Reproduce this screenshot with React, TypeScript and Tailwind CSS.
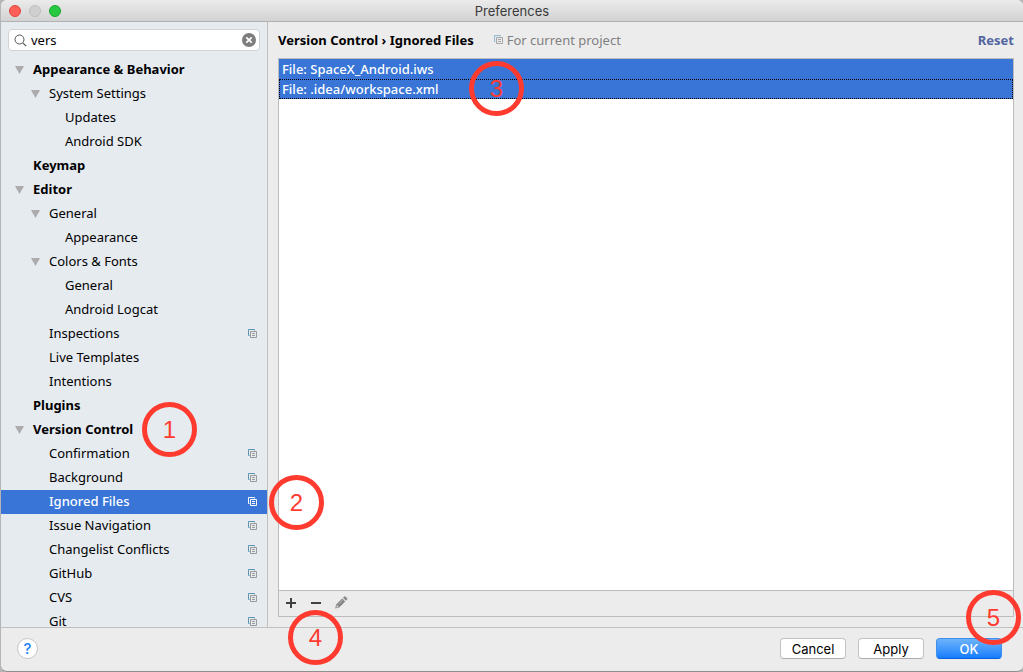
import { useState } from 'react';

type Item = {
  label: string;
  level: number;
  open?: boolean;
  project?: boolean;
  mark?: string;
};

const items: Item[] = [
  { label: 'Appearance & Behavior', level: 0, open: true },
  { label: 'System Settings', level: 1, open: true },
  { label: 'Updates', level: 2 },
  { label: 'Android SDK', level: 2 },
  { label: 'Keymap', level: 0 },
  { label: 'Editor', level: 0, open: true },
  { label: 'General', level: 1, open: true },
  { label: 'Appearance', level: 2 },
  { label: 'Colors & Fonts', level: 1, open: true },
  { label: 'General', level: 2 },
  { label: 'Android Logcat', level: 2 },
  { label: 'Inspections', level: 1, project: true },
  { label: 'Live Templates', level: 1 },
  { label: 'Intentions', level: 1 },
  { label: 'Plugins', level: 0 },
  { label: 'Version Control', level: 0, open: true, mark: '1' },
  { label: 'Confirmation', level: 1, project: true },
  { label: 'Background', level: 1, project: true },
  { label: 'Ignored Files', level: 1, project: true },
  { label: 'Issue Navigation', level: 1, project: true },
  { label: 'Changelist Conflicts', level: 1, project: true },
  { label: 'GitHub', level: 1, project: true },
  { label: 'CVS', level: 1, project: true },
  { label: 'Git', level: 1, project: true },
];

const indent = ['pl-3.5', 'pl-[30px]', 'pl-[46px]'];

function ProjectIcon({ back, front }: { back: string; front: string }) {
  return (
    <svg width="9" height="9" viewBox="0 0 9 9" fill="none" className="mb-px shrink-0" aria-hidden="true">
      <path d="M1.5 6.5h-1v-6h6v1" stroke={back} />
      <path d="M2.5 2.5h6v6h-6zM4 4.5h3M4 6.5h3" stroke={front} />
    </svg>
  );
}

// Numbered ring that points at a step of the walkthrough
function Mark({ n, className }: { n: string; className: string }) {
  return (
    <span
      className={`pointer-events-none absolute z-10 flex size-[55px] items-center justify-center rounded-full border-5 border-[#ff3b30] font-['Liberation_Sans',sans-serif] text-2xl font-normal text-[#ff3b30] ${className}`}
    >
      {n}
    </span>
  );
}

function TreeRow({ item, selected, onSelect }: { item: Item; selected: boolean; onSelect: () => void }) {
  return (
    <li className="relative">
      <button
        type="button"
        onClick={onSelect}
        className={`flex h-6 w-full items-center pr-2.5 text-left ${indent[item.level]} ${item.level === 0 ? 'font-bold' : ''} ${selected ? 'bg-[#3875d7] font-medium text-white' : ''}`}
      >
        <span className="w-[18px] shrink-0">
          {item.open && (
            <svg width="9" height="8" viewBox="0 0 9 8" aria-hidden="true">
              <path d="M0 0h9L4.500 8z" fill="#acacac" />
            </svg>
          )}
        </span>
        <span className="grow pb-0.5">{item.label}</span>
        {item.project && (
          <ProjectIcon back={selected ? '#ffffff' : '#5a93b5'} front={selected ? '#ffffff' : '#9a9a9a'} />
        )}
      </button>
      {item.mark && <Mark n={item.mark} className="-top-4 left-[141px]" />}
    </li>
  );
}

export default function App() {
  const [selected, setSelected] = useState(18);
  const [query, setQuery] = useState('vers');

  return (
    <div className="h-screen bg-[#b5b5b5] pl-px font-['Noto_Sans',sans-serif] text-[13px] leading-5 text-black">
      <div className="flex h-full flex-col overflow-hidden rounded-md border-b border-[#8f8f8f] bg-[#ececec]">
        <header className="relative flex h-[22px] shrink-0 items-center justify-center border-b border-[#b1b1b1] bg-linear-to-b from-[#ebebeb] to-[#d2d2d2]">
          <div className="absolute left-2 flex gap-2">
            <button type="button" aria-label="Close" className="size-3 rounded-full border border-[#e2463f] bg-[#ff5f57]" />
            <button type="button" aria-label="Minimize" className="size-3 rounded-full border border-[#bdbdbd] bg-[#cfcfcf]" />
            <button type="button" aria-label="Zoom" className="size-3 rounded-full border border-[#17a82d] bg-[#28c940]" />
          </div>
          <h1 className="font-[Inter,sans-serif] text-[#3a3a3a]">Preferences</h1>
        </header>

        <div className="flex min-h-0 grow">
          <aside className="w-[267px] shrink-0 overflow-hidden border-r border-[#c0c0c0] bg-[#e6ebf0]">
            <div className="m-[7px] flex h-[22px] items-center rounded border border-[#d0d3d6] bg-white pr-[3px] pl-[5px]">
              <svg width="13" height="13" viewBox="0 0 13 13" fill="none" stroke="#555" aria-hidden="true">
                <circle cx="5.500" cy="5.500" r="4.500" />
                <path d="M8.800 8.800l3.400 3.400" strokeWidth="1.200" />
              </svg>
              <input
                type="text"
                aria-label="Search settings"
                value={query}
                onChange={(e) => setQuery(e.target.value)}
                className="ml-1 min-w-0 grow outline-none"
              />
              <button type="button" aria-label="Clear search" onClick={() => setQuery('')}>
                <svg width="14" height="14" viewBox="0 0 14 14" aria-hidden="true">
                  <circle cx="7" cy="7" r="7" fill="#7d7d7d" />
                  <path d="M4.300 4.300l5.400 5.400M9.700 4.300l-5.400 5.400" stroke="#fff" strokeWidth="1.800" />
                </svg>
              </button>
            </div>
            <ul>
              {items.map((item, i) => (
                <TreeRow key={i} item={item} selected={i === selected} onSelect={() => setSelected(i)} />
              ))}
            </ul>
          </aside>

          <main className="relative flex min-w-0 grow flex-col pr-[9px] pb-2.5 pl-2.5">
            <div className="flex h-9 shrink-0 items-center">
              <h2 className="font-bold">Version Control › Ignored Files</h2>
              <span className="mr-1 ml-5">
                <ProjectIcon back="#8db9d3" front="#a5a5a5" />
              </span>
              <span className="text-[#808080]">For current project</span>
              <a href="#reset" className="ml-auto font-bold text-[#5365a0]">
                Reset
              </a>
            </div>

            <section className="relative flex min-h-0 grow flex-col border border-[#bcbcbc]">
              <ul className="grow bg-white font-medium text-white">
                <li className="h-5 bg-[#3875d7] px-[3px]">File: SpaceX_Android.iws</li>
                <li className="flex h-5 items-center border border-dotted border-black bg-[#3875d7] px-0.5">
                  File: .idea/workspace.xml
                </li>
              </ul>
              <div className="flex h-[26px] shrink-0 items-center gap-3 border-t border-[#bcbcbc] pb-0.5 pl-1.5">
                <button type="button" aria-label="Add">
                  <svg width="13" height="12" viewBox="0 0 13 12" stroke="#404040" strokeWidth="2" aria-hidden="true">
                    <path d="M1 6h10M6 1v10" />
                  </svg>
                </button>
                <button type="button" aria-label="Remove">
                  <svg width="13" height="12" viewBox="0 0 13 12" stroke="#404040" strokeWidth="2" aria-hidden="true">
                    <path d="M1 6h10" />
                  </svg>
                </button>
                <button type="button" aria-label="Edit">
                  <svg width="13" height="13" viewBox="0 0 13 13" aria-hidden="true">
                    <path d="M.2 12.500l1-4L7.200 2.500l3 3-6 6z" fill="#858585" />
                    <path d="M8 1.700l1.200-1.200q.6-.5 1.200 0l1.800 1.800q.5.600 0 1.200l-1.200 1.200z" fill="#8c8c8c" />
                    <path d="M1.700 9l2 2-2.200.500z" fill="#ececec" />
                    <path d="M3.200 8.500l5-5" stroke="#b4b4b4" />
                  </svg>
                </button>
              </div>
              <Mark n="3" className="top-0.5 left-[190px]" />
            </section>
            <Mark n="2" className="top-[453px] left-px" />
            <Mark n="4" className="-bottom-[38px] left-5" />
            <Mark n="5" className="right-0.5 -bottom-[18px]" />
          </main>
        </div>

        <footer className="flex h-11 shrink-0 items-center gap-3 border-t border-[#c0c0c0] pr-[21px] pb-0.5 pl-4 font-[Inter,sans-serif]">
          <button
            type="button"
            aria-label="Help"
            className="mr-auto size-[21px] rounded-full border border-[#c4c4c4] bg-white text-[15px] leading-5 font-medium text-[#1a82fb]"
          >
            ?
          </button>
          <button type="button" className="h-[21px] w-[66px] rounded border border-[#c3c3c3] border-b-[#acacac] bg-white">
            Cancel
          </button>
          <button type="button" className="h-[21px] w-[66px] rounded border border-[#c3c3c3] border-b-[#acacac] bg-white">
            Apply
          </button>
          <button
            type="button"
            className="h-[21px] w-[66px] rounded border border-[#3f8fee] border-b-[#0a60dc] bg-linear-to-b from-[#6bb3fa] to-[#127dfe] font-medium text-white"
          >
            OK
          </button>
        </footer>
      </div>
    </div>
  );
}
